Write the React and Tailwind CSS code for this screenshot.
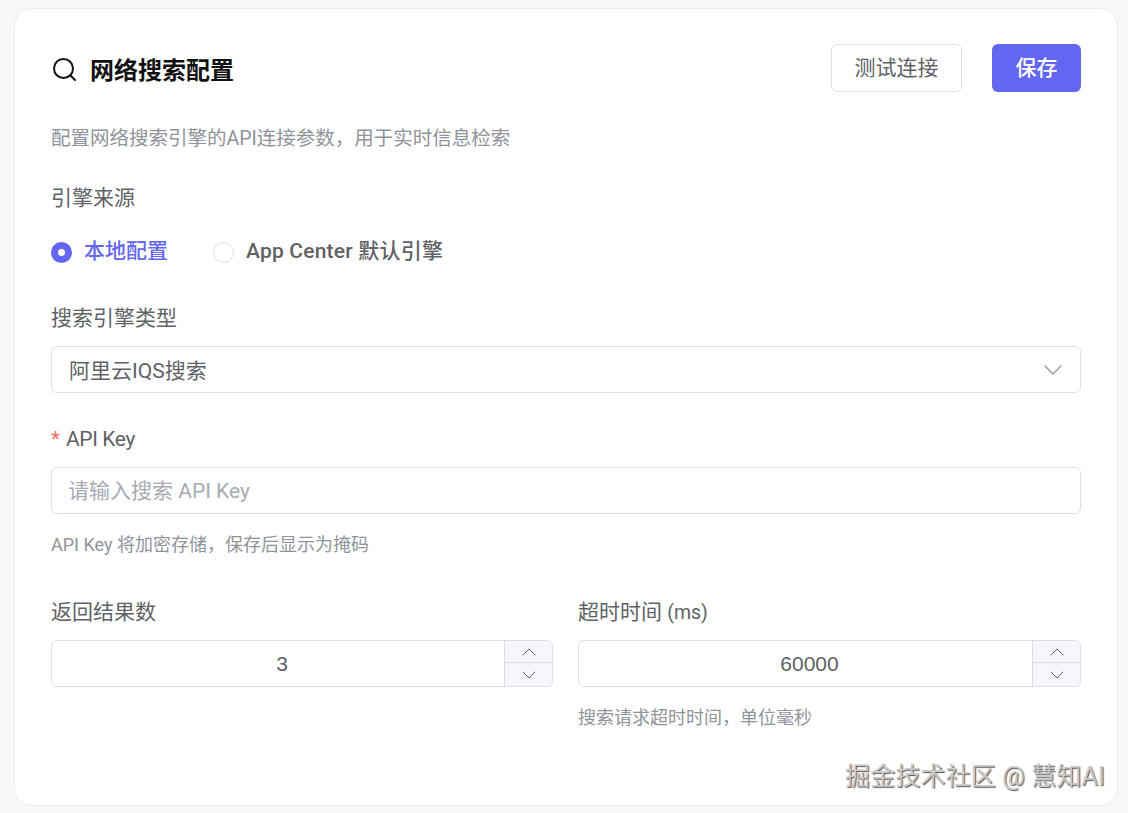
import React from 'react';
import { ChevronDown, ChevronUp } from 'lucide-react';

const font = 'font-["Roboto","Noto_Sans_CJK_SC",sans-serif]';

function NumberField({ value }) {
  return (
    <div className="flex h-[47px] rounded-[6px] border border-[#dcdfe6] bg-white overflow-hidden">
      <div className="flex-1 flex items-center justify-center pl-[8px] font-['Liberation_Sans',sans-serif] text-[21px] text-[#606266]">{value}</div>
      <div className="w-[48px] flex flex-col border-l border-[#dcdfe6] bg-[#f5f7fa] text-[#606266]">
        <div className="h-[22px] flex items-center justify-center border-b border-[#dcdfe6]">
          <ChevronUp size={24} strokeWidth={1} />
        </div>
        <div className="flex-1 flex items-center justify-center">
          <ChevronDown size={24} strokeWidth={1} />
        </div>
      </div>
    </div>
  );
}

export default function App() {
  return (
    <div className={`${font} relative h-[813px] overflow-hidden bg-[#f8f8f8] pt-[8px] pl-[14px] pr-[10px]`}>
      <div className="h-[798px] rounded-[18px] border border-[#e9eaec] bg-white pt-[35px] pl-[36px] pr-[36px]">
        <div className="flex items-center justify-between h-[48px]">
          <div className="flex items-center gap-[13px] mt-[6px]">
            <svg width="26" height="26" viewBox="0 0 26 26" fill="none" stroke="#111" strokeWidth="2" strokeLinecap="round">
              <circle cx="12.5" cy="10.5" r="9.5" />
              <path d="M19.5 17.5 L24 22" />
            </svg>
            <h1 className="text-[24px] font-bold leading-[36px] text-[#111]">网络搜索配置</h1>
          </div>
          <div className="flex items-center gap-[30px]">
            <button className="h-[48px] w-[131px] rounded-[6px] border border-[#dcdfe6] bg-white pt-[2px] text-[21px] text-[#606266]">测试连接</button>
            <button className="h-[48px] w-[89px] rounded-[6px] bg-[#6366f1] pt-[2px] text-[21px] font-medium text-white">保存</button>
          </div>
        </div>

        <p className="mt-[31px] text-[19.5px] leading-[32px] text-[#909399]">配置网络搜索引擎的API连接参数，用于实时信息检索</p>

        <div className="mt-[27px] text-[21px] leading-[32px] text-[#606266]">引擎来源</div>

        <div className="mt-[22px] flex items-center h-[32px] text-[21px] font-medium">
          <span className="flex h-[21px] w-[21px] items-center justify-center rounded-full bg-[#6366f1]">
            <span className="h-[7px] w-[7px] rounded-full bg-white" />
          </span>
          <span className="ml-[12px] text-[#6366f1]">本地配置</span>
          <span className="ml-[45px] h-[21px] w-[21px] rounded-full border border-[#dcdfe6] bg-white" />
          <span className="ml-[12px] tracking-[0.2px] text-[#606266]">App Center 默认引擎</span>
        </div>

        <div className="mt-[34px] text-[21px] leading-[32px] text-[#606266]">搜索引擎类型</div>

        <div className="mt-[12px] flex h-[47px] items-center justify-between rounded-[6px] border border-[#dcdfe6] pl-[17px] pr-[11px] text-[21px] text-[#606266]">
          <span className="pt-[5px]">阿里云IQS搜索</span>
          <ChevronDown size={32} strokeWidth={0.9} className="text-[#909399]" />
        </div>

        <div className="mt-[30px] text-[21px] leading-[32px] text-[#606266]">
          <span className="mr-[6px] text-[#f56c6c]">*</span><span className="tracking-[-0.4px]">API Key</span>
        </div>

        <div className="mt-[12px] flex h-[47px] items-center rounded-[6px] border border-[#dcdfe6] pl-[16px] pt-[2px] text-[21px] text-[#a8abb2]">
          请输入搜索 API Key
        </div>

        <p className="mt-[17px] text-[18px] leading-[27px] text-[#909399]">API Key 将加密存储，保存后显示为掩码</p>

        <div className="mt-[38px] grid grid-cols-[502px_503px] gap-[25px]">
          <div>
            <div className="text-[21px] leading-[32px] text-[#606266]">返回结果数</div>
            <div className="mt-[12px]"><NumberField value="3" /></div>
          </div>
          <div>
            <div className="text-[21px] leading-[32px] text-[#606266]">超时时间 <span className="text-[19.5px] leading-none">(ms)</span></div>
            <div className="mt-[12px]"><NumberField value="60000" /></div>
            <p className="mt-[17px] text-[18px] leading-[27px] text-[#909399]">搜索请求超时时间，单位毫秒</p>
          </div>
        </div>
      </div>

      {/* watermark baked into the screenshot */}
      <div className="absolute right-[23px] top-[759px] text-[25px] leading-[36px] tracking-[0.15px] text-[#c8c8c8] [text-shadow:1px_1px_1px_#555]">
        掘金技术社区 @ 慧知AI
      </div>
    </div>
  );
}
